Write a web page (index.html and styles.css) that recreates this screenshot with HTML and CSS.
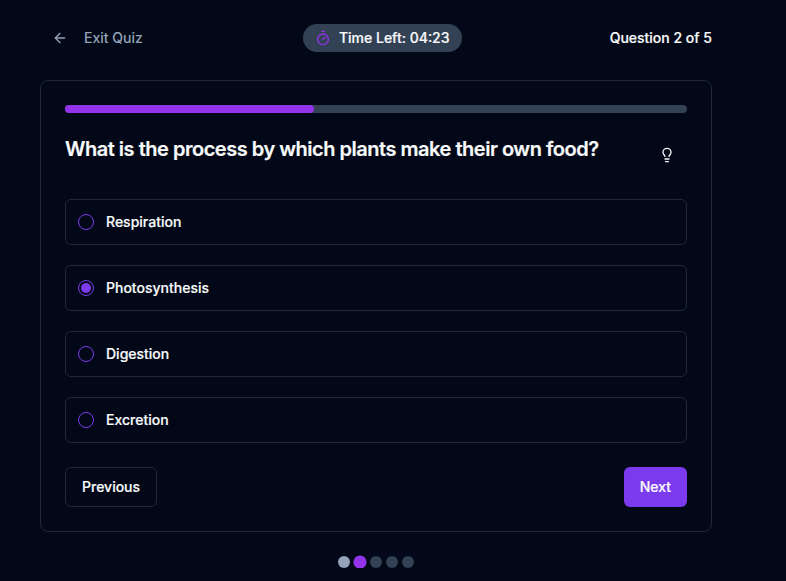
FILE: index.html
```
<!DOCTYPE html>
<html lang="en">
<head>
<meta charset="utf-8">
<title>Quiz</title>
<link rel="stylesheet" href="styles.css">
</head>
<body>
<main class="quiz">
  <header class="topbar">
    <button class="exit">
      <svg class="icon" viewBox="0 0 24 24"><path d="m12 19-7-7 7-7"/><path d="M19 12H5"/></svg>
      <span>Exit Quiz</span>
    </button>
    <div class="timer">
      <svg class="icon timer-icon" viewBox="0 0 24 24"><path d="M10 2h4"/><path d="m12 14 3-3"/><circle cx="12" cy="14" r="8"/></svg>
      <span>Time Left: 04:23</span>
    </div>
    <div class="count">Question 2 of 5</div>
  </header>
  <section class="card">
    <div class="progress"><div class="progress-fill"></div></div>
    <div class="question">
      <h1>What is the process by which plants make their own food?</h1>
      <button class="hint" aria-label="Hint">
        <svg class="icon" viewBox="0 0 24 24"><path d="M15 14c.2-1 .7-1.7 1.5-2.5 1-.9 1.5-2.2 1.5-3.5A6 6 0 0 0 6 8c0 1 .2 2.2 1.5 3.5.7.7 1.3 1.5 1.5 2.5"/><path d="M9 18h6"/><path d="M10 22h4"/></svg>
      </button>
    </div>
    <div class="options">
      <div class="option"><span class="radio"></span>Respiration</div>
      <div class="option"><span class="radio checked"></span>Photosynthesis</div>
      <div class="option"><span class="radio"></span>Digestion</div>
      <div class="option"><span class="radio"></span>Excretion</div>
    </div>
    <div class="actions">
      <button class="btn outline">Previous</button>
      <button class="btn primary">Next</button>
    </div>
  </section>
  <nav class="dots">
    <span class="dot done"></span><span class="dot current"></span><span class="dot"></span><span class="dot"></span><span class="dot"></span>
  </nav>
</main>
</body>
</html>
```
FILE: styles.css
```
* { box-sizing: border-box; }
body {
  margin: 0;
  background: #020817;
  color: #f9fafb;
  font: 500 14px/20px Inter, sans-serif;
}
button {
  margin: 0;
  border: 0;
  background: none;
  color: inherit;
  font: inherit;
}
.quiz { width: 672px; margin: 18px 0 0 40px; }
.icon {
  width: 16px;
  height: 16px;
  flex: none;
  fill: none;
  stroke: currentColor;
  stroke-width: 2;
  stroke-linecap: round;
  stroke-linejoin: round;
}
.topbar {
  display: flex;
  align-items: center;
  justify-content: space-between;
  height: 40px;
}
.exit {
  display: flex;
  align-items: center;
  gap: 16px;
  padding: 0 12px;
  color: #94a3b8;
}
.timer {
  display: flex;
  align-items: center;
  gap: 8px;
  padding: 4px 12px;
  border-radius: 14px;
  background: #334155;
}
/* A hairline stroke firms up light text on the dark surface. */
.timer span,
.count,
.option,
.btn { -webkit-text-stroke: 0.2px currentColor; }
.timer-icon { color: #9333ea; }
.card {
  height: 452px;
  margin-top: 22px;
  padding: 24px;
  border: 1px solid #1f2937;
  border-radius: 8px;
}
.progress {
  height: 8px;
  border-radius: 4px;
  background: #334155;
}
.progress-fill {
  width: 40%;
  height: 100%;
  border-radius: 4px;
  background: #9333ea;
}
.question {
  display: flex;
  align-items: flex-start;
  justify-content: space-between;
  height: 62px;
  margin-top: 22px;
}
h1 {
  margin: 0;
  font-size: 20px;
  font-weight: 600;
  line-height: 28px;
  letter-spacing: -0.48px;
  white-space: nowrap;
  -webkit-text-stroke: 0.2px currentColor;
}
.hint {
  display: grid;
  place-items: center;
  width: 40px;
  height: 40px;
  padding: 0;
}
.options { display: grid; gap: 20px; margin-top: 2px; }
.option {
  display: flex;
  align-items: center;
  gap: 12px;
  height: 46px;
  padding: 0 12px;
  border: 1px solid #1f2937;
  border-radius: 6px;
}
.radio {
  display: grid;
  place-items: center;
  width: 16px;
  height: 16px;
  border: 1px solid #7c3aed;
  border-radius: 50%;
}
.checked::after {
  content: "";
  width: 10px;
  height: 10px;
  border-radius: 50%;
  background: #7c3aed;
}
.actions {
  display: flex;
  justify-content: space-between;
  margin-top: 24px;
}
.btn { height: 40px; padding: 0 16px; border-radius: 6px; }
.outline { border: 1px solid #1f2937; }
.primary { background: #7c3aed; }
.dots {
  display: flex;
  justify-content: center;
  gap: 4px;
  margin-top: 24px;
}
.dot {
  width: 12px;
  height: 12px;
  border-radius: 50%;
  background: #334155;
}
.done { background: #94a3b8; }
.current { background: #9333ea; transform: scale(1.1); }
```
